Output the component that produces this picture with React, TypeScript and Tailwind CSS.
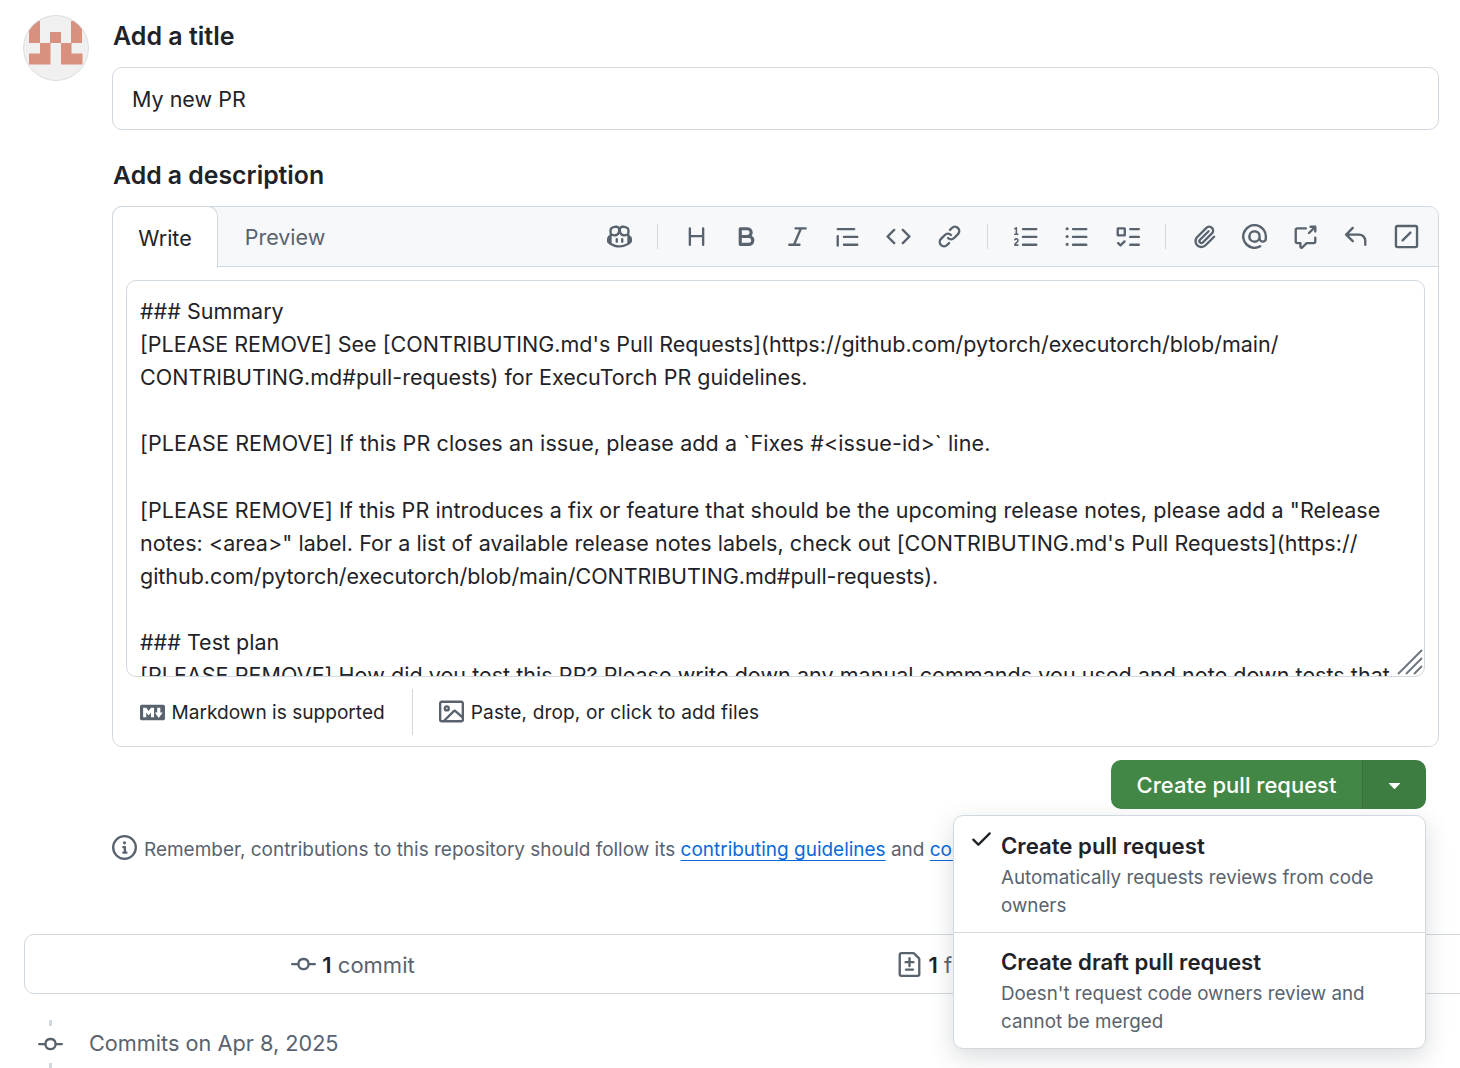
import type { ReactNode } from 'react';

// octicons, 16px artwork
const paths: Record<string, string> = {
  copilot:
    'M7.998 15.035c-4.562 0-7.873-2.914-7.998-3.749V9.338c.085-.628.677-1.686 1.588-2.065.013-.07.024-.143.036-.218.029-.183.06-.384.126-.612-.201-.508-.254-1.084-.254-1.656 0-.87.128-1.769.693-2.484.579-.733 1.494-1.124 2.724-1.261 1.206-.134 2.262.034 2.944.765.05.053.096.108.139.165.044-.057.094-.112.143-.165.682-.731 1.738-.899 2.944-.765 1.23.137 2.145.528 2.724 1.261.566.715.693 1.614.693 2.484 0 .572-.053 1.148-.254 1.656.066.228.098.429.126.612.012.076.024.148.037.218.924.385 1.522 1.471 1.591 2.095v1.872c0 .766-3.351 3.795-8.002 3.795Zm0-1.485c2.28 0 4.584-1.11 5.002-1.433V7.862l-.023-.116c-.49.21-1.075.291-1.727.291-1.146 0-2.059-.327-2.71-.991A3.222 3.222 0 0 1 8 6.303a3.24 3.24 0 0 1-.544.743c-.65.664-1.563.991-2.71.991-.652 0-1.236-.081-1.727-.291l-.023.116v4.255c.419.323 2.722 1.433 5.002 1.433ZM6.762 2.83c-.193-.206-.637-.413-1.682-.297-1.019.113-1.479.404-1.713.7-.247.312-.369.789-.369 1.554 0 .793.129 1.171.308 1.371.162.181.519.379 1.442.379.853 0 1.339-.235 1.638-.54.315-.322.527-.827.617-1.553.117-.935-.037-1.395-.241-1.614Zm4.155-.297c-1.044-.116-1.488.091-1.681.297-.204.219-.359.679-.242 1.614.091.726.303 1.231.618 1.553.299.305.784.54 1.638.54.922 0 1.28-.198 1.442-.379.179-.2.308-.578.308-1.371 0-.765-.123-1.242-.37-1.554-.233-.296-.693-.587-1.713-.7ZM6.25 9.037a.75.75 0 0 1 .75.75v1.501a.75.75 0 0 1-1.5 0V9.787a.75.75 0 0 1 .75-.75Zm4.25.75v1.501a.75.75 0 0 1-1.5 0V9.787a.75.75 0 0 1 1.5 0Z',
  heading:
    'M3.75 2a.75.75 0 0 1 .75.75V7h7V2.75a.75.75 0 0 1 1.5 0v10.5a.75.75 0 0 1-1.5 0V8.5h-7v4.75a.75.75 0 0 1-1.5 0V2.75A.75.75 0 0 1 3.75 2Z',
  bold: 'M4 2h4.5a3.501 3.501 0 0 1 2.852 5.53A3.499 3.499 0 0 1 9.5 14H4a1 1 0 0 1-1-1V3a1 1 0 0 1 1-1Zm1 7v3h4.5a1.5 1.5 0 0 0 0-3Zm3.5-2a1.5 1.5 0 0 0 0-3H5v3Z',
  italic:
    'M6 2.75A.75.75 0 0 1 6.75 2h6.5a.75.75 0 0 1 0 1.5h-2.505l-3.858 9H9.25a.75.75 0 0 1 0 1.5h-6.5a.75.75 0 0 1 0-1.5h2.505l3.858-9H6.75A.75.75 0 0 1 6 2.75Z',
  quote:
    'M1.75 2.5h10.5a.75.75 0 0 1 0 1.5H1.75a.75.75 0 0 1 0-1.5Zm4 5h8.5a.75.75 0 0 1 0 1.5h-8.5a.75.75 0 0 1 0-1.5Zm0 5h8.5a.75.75 0 0 1 0 1.5h-8.5a.75.75 0 0 1 0-1.5ZM2.5 7.75v6a.75.75 0 0 1-1.5 0v-6a.75.75 0 0 1 1.5 0Z',
  code: 'm11.28 3.22 4.25 4.25a.75.75 0 0 1 0 1.06l-4.25 4.25a.749.749 0 0 1-1.275-.326.749.749 0 0 1 .215-.734L13.94 8l-3.72-3.72a.749.749 0 0 1 .326-1.275.749.749 0 0 1 .734.215Zm-6.56 0a.751.751 0 0 1 1.042.018.751.751 0 0 1 .018 1.042L2.06 8l3.72 3.72a.749.749 0 0 1-.326 1.275.749.749 0 0 1-.734-.215L.47 8.53a.75.75 0 0 1 0-1.06Z',
  link: 'm7.775 3.275 1.25-1.25a3.5 3.5 0 1 1 4.95 4.95l-2.5 2.5a3.5 3.5 0 0 1-4.95 0 .751.751 0 0 1 .018-1.042.751.751 0 0 1 1.042-.018 1.998 1.998 0 0 0 2.83 0l2.5-2.5a2.002 2.002 0 0 0-2.83-2.83l-1.25 1.25a.751.751 0 0 1-1.042-.018.751.751 0 0 1-.018-1.042Zm-4.69 9.64a1.998 1.998 0 0 0 2.83 0l1.25-1.25a.751.751 0 0 1 1.042.018.751.751 0 0 1 .018 1.042l-1.25 1.25a3.5 3.5 0 1 1-4.95-4.95l2.5-2.5a3.5 3.5 0 0 1 4.95 0 .751.751 0 0 1-.018 1.042.751.751 0 0 1-1.042.018 1.998 1.998 0 0 0-2.83 0l-2.5 2.5a1.998 1.998 0 0 0 0 2.83Z',
  listOrdered:
    'M5 3.25a.75.75 0 0 1 .75-.75h8.5a.75.75 0 0 1 0 1.5h-8.5A.75.75 0 0 1 5 3.25Zm0 5a.75.75 0 0 1 .75-.75h8.5a.75.75 0 0 1 0 1.5h-8.5A.75.75 0 0 1 5 8.25Zm0 5a.75.75 0 0 1 .75-.75h8.5a.75.75 0 0 1 0 1.5h-8.5a.75.75 0 0 1-.75-.75ZM.924 10.32a.5.5 0 0 1-.851-.525l.001-.001.001-.002.002-.004.007-.011c.097-.144.215-.273.348-.384.228-.19.588-.392 1.068-.392.468 0 .858.181 1.126.484.259.294.377.673.377 1.038 0 .987-.686 1.495-1.156 1.845l-.047.035c-.303.225-.522.4-.654.597h1.357a.5.5 0 0 1 0 1H.5a.5.5 0 0 1-.5-.5c0-1.005.692-1.52 1.167-1.875l.035-.025c.531-.396.8-.625.8-1.078a.57.57 0 0 0-.128-.376C1.806 10.068 1.695 10 1.5 10a.658.658 0 0 0-.429.163.835.835 0 0 0-.144.153ZM2.003 2.5V6h.503a.5.5 0 0 1 0 1H.5a.5.5 0 0 1 0-1h.503V3.308l-.28.14a.5.5 0 0 1-.446-.895l1.003-.5a.5.5 0 0 1 .723.447Z',
  listUnordered:
    'M5.75 2.5h8.5a.75.75 0 0 1 0 1.5h-8.5a.75.75 0 0 1 0-1.5Zm0 5h8.5a.75.75 0 0 1 0 1.5h-8.5a.75.75 0 0 1 0-1.5Zm0 5h8.5a.75.75 0 0 1 0 1.5h-8.5a.75.75 0 0 1 0-1.5ZM2 14a1 1 0 1 1 0-2 1 1 0 0 1 0 2Zm1-6a1 1 0 1 1-2 0 1 1 0 0 1 2 0ZM2 4a1 1 0 1 1 0-2 1 1 0 0 1 0 2Z',
  tasklist:
    'M2 2h4a1 1 0 0 1 1 1v4a1 1 0 0 1-1 1H2a1 1 0 0 1-1-1V3a1 1 0 0 1 1-1Zm4.655 8.595a.75.75 0 0 1 0 1.06L4.03 14.28a.75.75 0 0 1-1.06 0l-1.5-1.5a.749.749 0 0 1 .326-1.275.749.749 0 0 1 .734.215l.97.97 2.095-2.095a.75.75 0 0 1 1.06 0ZM9.75 2.5h5.5a.75.75 0 0 1 0 1.5h-5.5a.75.75 0 0 1 0-1.5Zm0 5h5.5a.75.75 0 0 1 0 1.5h-5.5a.75.75 0 0 1 0-1.5Zm0 5h5.5a.75.75 0 0 1 0 1.5h-5.5a.75.75 0 0 1 0-1.5Zm-7.25-9v3h3v-3Z',
  paperclip:
    'M12.212 3.02a1.753 1.753 0 0 0-2.478.003l-5.83 5.83a3.007 3.007 0 0 0-.88 2.127c0 .795.315 1.551.88 2.116.567.567 1.333.89 2.126.89.79 0 1.548-.321 2.116-.89l5.48-5.48a.75.75 0 0 1 1.061 1.06l-5.48 5.48a4.492 4.492 0 0 1-3.177 1.33c-1.2 0-2.345-.487-3.187-1.33a4.483 4.483 0 0 1-1.32-3.177c0-1.195.475-2.341 1.32-3.186l5.83-5.83a3.25 3.25 0 0 1 5.553 2.297c0 .863-.343 1.691-.953 2.301L7.439 12.39c-.375.377-.884.59-1.416.593a1.998 1.998 0 0 1-1.412-.587 1.992 1.992 0 0 1 0-2.828l5.48-5.48a.751.751 0 0 1 1.042.018.751.751 0 0 1 .018 1.042l-5.48 5.48a.492.492 0 0 0 0 .707.499.499 0 0 0 .71 0l5.83-5.83a1.755 1.755 0 0 0 0-2.485Z',
  mention:
    'M4.75 2.37a6.501 6.501 0 0 0 6.5 11.26.75.75 0 0 1 .75 1.298A7.999 7.999 0 0 1 .989 4.148 8 8 0 0 1 16 7.75v1.5a2.75 2.75 0 0 1-5.072 1.475 3.999 3.999 0 0 1-6.65-4.19A4 4 0 0 1 12 8v1.25a1.25 1.25 0 0 0 2.5 0V7.867a6.5 6.5 0 0 0-9.75-5.496ZM10.5 8a2.5 2.5 0 1 0-5 0 2.5 2.5 0 0 0 5 0Z',
  crossReference:
    'M2.75 3.5a.25.25 0 0 0-.25.25v7.5c0 .138.112.25.25.25h2a.75.75 0 0 1 .75.75v2.19l2.72-2.72a.749.749 0 0 1 .53-.22h4.5a.25.25 0 0 0 .25-.25v-2.5a.75.75 0 0 1 1.5 0v2.5A1.75 1.75 0 0 1 13.25 13H9.06l-2.573 2.573A1.458 1.458 0 0 1 4 14.543V13H2.75A1.75 1.75 0 0 1 1 11.25v-7.5C1 2.784 1.784 2 2.75 2h5.5a.75.75 0 0 1 0 1.5ZM15 1.75v3a.75.75 0 0 1-1.5 0V3.56L10.78 6.28a.749.749 0 0 1-1.275-.326.749.749 0 0 1 .215-.734L12.44 2.5h-1.19a.75.75 0 0 1 0-1.5h3A.75.75 0 0 1 15 1.75Z',
  reply:
    'M6.78 1.97a.75.75 0 0 1 0 1.06L3.81 6h6.44A4.75 4.75 0 0 1 15 10.75v2.5a.75.75 0 0 1-1.5 0v-2.5a3.25 3.25 0 0 0-3.25-3.25H3.81l2.97 2.97a.749.749 0 0 1-.326 1.275.749.749 0 0 1-.734-.215L1.47 7.28a.75.75 0 0 1 0-1.06l4.25-4.25a.75.75 0 0 1 1.06 0Z',
  markdown:
    'M14.85 3c.63 0 1.15.52 1.14 1.15v7.7c0 .63-.51 1.15-1.15 1.15H1.15C.52 13 0 12.48 0 11.84V4.15C0 3.52.52 3 1.15 3ZM9 11V5H7L5.5 7 4 5H2v6h2V8l1.5 1.92L7 8v3Zm2.99.5L14.5 8H13V5h-2v3H9.5Z',
  image:
    'M16 13.25A1.75 1.75 0 0 1 14.25 15H1.75A1.75 1.75 0 0 1 0 13.25V2.75C0 1.784.784 1 1.75 1h12.5c.966 0 1.75.784 1.75 1.75ZM1.75 2.5a.25.25 0 0 0-.25.25v10.5c0 .138.112.25.25.25h.94l.03-.03 6.077-6.078a1.75 1.75 0 0 1 2.412-.06L14.5 10.31V2.75a.25.25 0 0 0-.25-.25Zm12.5 11a.25.25 0 0 0 .25-.25v-.917l-4.298-3.889a.25.25 0 0 0-.344.009L4.81 13.5ZM7 6a2 2 0 1 1-3.999.001A2 2 0 0 1 7 6ZM5.5 6a.5.5 0 1 0-1 0 .5.5 0 0 0 1 0Z',
  info: 'M0 8a8 8 0 1 1 16 0A8 8 0 0 1 0 8Zm8-6.5a6.5 6.5 0 1 0 0 13 6.5 6.5 0 0 0 0-13ZM6.5 7.75A.75.75 0 0 1 7.25 7h1a.75.75 0 0 1 .75.75v2.75h.25a.75.75 0 0 1 0 1.5h-2a.75.75 0 0 1 0-1.5h.25v-2h-.25a.75.75 0 0 1-.75-.75ZM8 6a1 1 0 1 1 0-2 1 1 0 0 1 0 2Z',
  check:
    'M13.78 4.22a.75.75 0 0 1 0 1.06l-7.25 7.25a.75.75 0 0 1-1.06 0L2.22 9.28a.751.751 0 0 1 .018-1.042.751.751 0 0 1 1.042-.018L6 10.94l6.72-6.72a.75.75 0 0 1 1.06 0Z',
  triangleDown:
    'm4.427 7.427 3.396 3.396a.25.25 0 0 0 .354 0l3.396-3.396A.25.25 0 0 0 11.396 7H4.604a.25.25 0 0 0-.177.427Z',
  gitCommit:
    'M11.93 8.5a4.002 4.002 0 0 1-7.86 0H.75a.75.75 0 0 1 0-1.5h3.32a4.002 4.002 0 0 1 7.86 0h3.32a.75.75 0 0 1 0 1.5Zm-1.43-.75a2.5 2.5 0 1 0-5 0 2.5 2.5 0 0 0 5 0Z',
  fileDiff:
    'M1 1.75C1 .784 1.784 0 2.75 0h7.586c.464 0 .909.184 1.237.513l2.914 2.914c.329.328.513.773.513 1.237v9.586A1.75 1.75 0 0 1 13.25 16H2.75A1.75 1.75 0 0 1 1 14.25Zm1.75-.25a.25.25 0 0 0-.25.25v12.5c0 .138.112.25.25.25h10.5a.25.25 0 0 0 .25-.25V4.664a.25.25 0 0 0-.073-.177l-2.914-2.914a.25.25 0 0 0-.177-.073ZM8 3.25a.75.75 0 0 1 .75.75v1.75h1.75a.75.75 0 0 1 0 1.5H8.75V9a.75.75 0 0 1-1.5 0V7.25H5.5a.75.75 0 0 1 0-1.5h1.75V4A.75.75 0 0 1 8 3.25Zm-3 8a.75.75 0 0 1 .75-.75h4.5a.75.75 0 0 1 0 1.5h-4.5a.75.75 0 0 1-.75-.75Z',
};

function Octicon({ name, className }: { name: string; className?: string }) {
  return (
    <svg width="25" height="25" viewBox="0 0 16 16" fill="currentColor" className={`shrink-0 ${className ?? ''}`}>
      <path d={paths[name]} />
    </svg>
  );
}

function SavedReply() {
  return (
    <svg width="25" height="25" viewBox="0 0 16 16" fill="none" stroke="currentColor" strokeWidth="1.5">
      <rect x="1.25" y="1.25" width="13.5" height="13.5" rx="1" />
      <path d="M5.5 10.5l5-5" strokeLinecap="round" />
    </svg>
  );
}

function Avatar() {
  return (
    <svg width="66" height="66" viewBox="0 0 66 66" className="mt-px shrink-0">
      <defs>
        <clipPath id="avatar-clip">
          <circle cx="33" cy="33" r="32.5" />
        </clipPath>
      </defs>
      <circle cx="33" cy="33" r="32.5" fill="#f0f0f0" />
      <g clipPath="url(#avatar-clip)" fill="#d7917e">
        <rect x="6" y="6" width="11" height="22" />
        <rect x="48" y="6" width="11" height="22" />
        <rect x="27" y="17" width="11" height="11" />
        <rect x="17" y="28" width="10.5" height="11" />
        <rect x="6" y="38.5" width="21.5" height="11" />
        <rect x="38" y="28" width="10.5" height="11" />
        <rect x="38" y="38.5" width="21.5" height="11" />
      </g>
      <circle cx="33" cy="33" r="32.5" fill="none" stroke="#dcdee1" />
    </svg>
  );
}

function ToolButton({ children }: { children: ReactNode }) {
  return <span className="flex h-[25px] w-[25px] items-center justify-center">{children}</span>;
}

function Divider() {
  return <span className="-mx-[0.15px] h-[25px] w-px bg-[#d1d9e0]" />;
}

const lines = [
  { text: '### Summary', cls: '' },
  { text: "[PLEASE REMOVE] See [CONTRIBUTING.md's Pull Requests](https://github.com/pytorch/executorch/blob/main/", cls: '' },
  { text: 'CONTRIBUTING.md#pull-requests) for ExecuTorch PR guidelines.', cls: 'tracking-[0.02px]' },
  { text: '', cls: '' },
  { text: '[PLEASE REMOVE] If this PR closes an issue, please add a `Fixes #<issue-id>` line.', cls: 'tracking-[0.11px]' },
  { text: '', cls: '' },
  { text: '[PLEASE REMOVE] If this PR introduces a fix or feature that should be the upcoming release notes, please add a "Release', cls: 'tracking-[0.07px]' },
  { text: "notes: <area>\" label. For a list of available release notes labels, check out [CONTRIBUTING.md's Pull Requests](https://", cls: 'tracking-[0.05px]' },
  { text: 'github.com/pytorch/executorch/blob/main/CONTRIBUTING.md#pull-requests).', cls: 'tracking-[-0.04px]' },
  { text: '', cls: '' },
  { text: '### Test plan', cls: '' },
  { text: '[PLEASE REMOVE] How did you test this PR? Please write down any manual commands you used and note down tests that', cls: 'tracking-[0.05px]' },
];

export default function App() {
  return (
    <div className="relative h-[1068px] overflow-hidden bg-white font-['Inter',sans-serif] text-[#1f2328]">
      <div className="flex gap-[23px] pl-[23px] pr-[21px] pt-[14px]">
        <Avatar />
        <div className="min-w-0 flex-1">
          <h2 className="pl-px text-[25px] font-semibold leading-[44px]">Add a title</h2>
          <div className="mt-[9px] flex h-[63px] items-center rounded-[10px] border border-[#d1d9e0] px-[19px] pt-[2px] text-[21.5px]">
            My new PR
          </div>
          <h2 className="mt-[23px] pl-px text-[24.8px] font-semibold leading-[44px]">Add a description</h2>

          <div className="mt-[9px] h-[541px] rounded-[10px] border border-[#d1d9e0]">
            <div className="flex h-[60px] rounded-t-[10px] border-b border-[#d1d9e0] bg-[#f6f8fa]">
              <div className="-mb-px -ml-px -mt-px flex h-[62px] w-[106px] items-center justify-center rounded-t-[10px] border border-b-0 border-[#d1d9e0] bg-white pt-[2px] text-[21.5px]">
                Write
              </div>
              <div className="flex w-[134px] items-center justify-center pt-[2px] text-[21.5px] text-[#59636e]">Preview</div>
              <div className="ml-auto flex items-center gap-[25.6px] pr-[19px] text-[#59636e]">
                <ToolButton><Octicon name="copilot" /></ToolButton>
                <Divider />
                <ToolButton><Octicon name="heading" /></ToolButton>
                <ToolButton><Octicon name="bold" /></ToolButton>
                <ToolButton><Octicon name="italic" /></ToolButton>
                <ToolButton><Octicon name="quote" /></ToolButton>
                <ToolButton><Octicon name="code" /></ToolButton>
                <ToolButton><Octicon name="link" /></ToolButton>
                <Divider />
                <ToolButton><Octicon name="listOrdered" /></ToolButton>
                <ToolButton><Octicon name="listUnordered" /></ToolButton>
                <ToolButton><Octicon name="tasklist" /></ToolButton>
                <Divider />
                <ToolButton><Octicon name="paperclip" /></ToolButton>
                <ToolButton><Octicon name="mention" /></ToolButton>
                <ToolButton><Octicon name="crossReference" /></ToolButton>
                <ToolButton><Octicon name="reply" /></ToolButton>
                <ToolButton><SavedReply /></ToolButton>
              </div>
            </div>

            <div className="px-[13px] pt-[13px]">
              <div className="relative h-[397px] overflow-hidden rounded-[10px] border border-[#d1d9e0] px-[13px] pt-[14px] text-[21.5px] leading-[33.1px]">
                {lines.map((line, i) => (
                  <div key={i} className={`h-[33.1px] whitespace-pre ${line.cls}`}>
                    {line.text}
                  </div>
                ))}
                <svg width="26" height="26" viewBox="0 0 26 26" className="absolute bottom-[1px] right-[1px]" stroke="#6e7781" strokeWidth="2">
                  <path d="M1 25L25 1M9 25L25 9M17 25L25 17" />
                </svg>
              </div>
            </div>

            <div className="flex h-[70px] items-center pl-[27px] text-[19.1px] text-[#1f2328]">
              <div className="flex h-[46px] items-center gap-[6.5px] border-r border-[#d1d9e0] pr-[27.5px]">
                <Octicon name="markdown" className="text-[#59636e]" />
                Markdown is supported
              </div>
              <div className="flex items-center gap-[6.5px] pl-[26px] tracking-[0.12px]">
                <Octicon name="image" className="text-[#59636e]" />
                Paste, drop, or click to add files
              </div>
            </div>
          </div>

          <div className="mt-[13px] flex justify-end pr-[13px]">
            <div className="flex h-[49px] w-[315px] overflow-hidden rounded-[10px] text-white">
              <div className="flex w-[251px] items-center justify-center bg-[#438746] pt-[2px] text-[22px] font-medium">
                Create pull request
              </div>
              <div className="flex flex-1 items-center justify-center border-l border-[#3a7039] bg-[#3d7d41]">
                <Octicon name="triangleDown" />
              </div>
            </div>
          </div>

          <div className="mt-[26px] flex items-start gap-[7px] whitespace-nowrap text-[18.98px] leading-[26px] text-[#59636e]">
            <Octicon name="info" />
            <span className="pt-[2px]">
              Remember, contributions to this repository should follow its{' '}
              <span className="text-[#0969da] underline decoration-1 underline-offset-[4px]">contributing guidelines</span> and{' '}
              <span className="text-[#0969da] underline decoration-1 underline-offset-[4px]">code of conduct</span>.
            </span>
          </div>
        </div>
      </div>

      <div className="ml-[24px] mt-[71px] flex h-[60px] w-[1500px] items-center rounded-[10px] border border-[#d1d9e0] text-[22px]">
        <div className="flex w-[656px] items-center justify-center gap-[6px] text-[#59636e]">
          <Octicon name="gitCommit" />
          <span className="pt-[2px]">
            <b className="font-semibold text-[#1f2328]">1</b> commit
          </span>
        </div>
        <div className="flex w-[608px] items-center justify-center gap-[6px] text-[#59636e]">
          <Octicon name="fileDiff" />
          <span className="pt-[2px]">
            <b className="font-semibold text-[#1f2328]">1</b> file changed
          </span>
        </div>
      </div>

      <div className="relative ml-[38px] mt-[26px] flex h-[48px] items-center text-[21.7px] text-[#59636e]">
        <span className="absolute inset-y-0 left-[11px] w-[3px] bg-[#d1d9e0]" />
        <span className="relative flex w-[25px] items-center justify-center bg-white py-[6px]">
          <Octicon name="gitCommit" />
        </span>
        <span className="-mt-[2px] ml-[26px]">Commits on Apr 8, 2025</span>
      </div>

      <div className="absolute left-[953px] top-[815px] w-[473px] rounded-[10px] border border-[#d1d9e0] bg-white shadow-[0_8px_24px_rgba(66,74,83,0.2)]">
        <div className="relative h-[117px] border-b border-[#d1d9e0] pl-[47px] pt-[13px]">
          <Octicon name="check" className="absolute left-[15px] top-[10px]" />
          <div className="text-[22.2px] font-semibold leading-[33px]">Create pull request</div>
          <div className="mt-[2px] w-[400px] text-[18.8px] leading-[28px] text-[#59636e]">
            Automatically requests reviews from code owners
          </div>
        </div>
        <div className="h-[115px] pl-[47px] pt-[12px]">
          <div className="text-[22.2px] font-semibold leading-[33px]">Create draft pull request</div>
          <div className="mt-[2px] w-[400px] text-[18.8px] leading-[28px] text-[#59636e]">
            Doesn't request code owners review and cannot be merged
          </div>
        </div>
      </div>
    </div>
  );
}
